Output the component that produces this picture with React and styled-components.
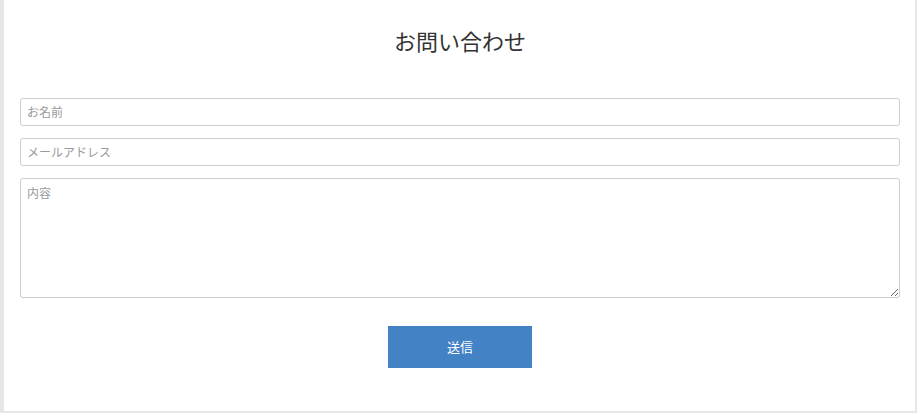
import React from 'react';
import styled, { createGlobalStyle } from 'styled-components';

const GlobalStyle = createGlobalStyle`
  html, body {
    margin: 0;
    padding: 0;
    background: #e6e6e6;
    font-family: "Noto Sans CJK JP", "Noto Sans", sans-serif;
  }
`;

const Page = styled.div`
  margin-left: 4px;
  width: 911px;
  height: 411px;
  background: #ffffff;
  box-sizing: border-box;
  padding: 24px 15px 0 16px;
`;

const Title = styled.h2`
  margin: 0 0 42px;
  font-size: 22px;
  line-height: 32px;
  font-weight: 400;
  color: #333333;
  text-align: center;
`;

const Form = styled.form`
  display: flex;
  flex-direction: column;
  gap: 12px;
`;

const Field = styled.input`
  box-sizing: border-box;
  display: block;
  width: 100%;
  height: 28px;
  margin: 0;
  padding: 0 6px 2px;
  border: 1px solid #cccccc;
  border-radius: 3px;
  font-family: inherit;
  font-size: 12px;
  color: #333;
  outline: none;
  &::placeholder { color: #999999; }
`;

const Area = styled.textarea`
  box-sizing: border-box;
  display: block;
  width: 100%;
  height: 120px;
  margin: 0;
  padding: 5px 6px;
  border: 1px solid #cccccc;
  border-radius: 3px;
  font-family: inherit;
  font-size: 12px;
  line-height: 17px;
  color: #333;
  outline: none;
  &::placeholder { color: #999999; }
`;

const Actions = styled.div`
  display: flex;
  justify-content: center;
  margin-top: 16px;
`;

const SendButton = styled.button`
  width: 144px;
  height: 42px;
  padding: 0 0 2px;
  border: none;
  background: #4282c5;
  color: #ffffff;
  font-family: inherit;
  font-size: 13px;
  cursor: pointer;
`;

export default function App() {
  return (
    <>
      <GlobalStyle />
      <Page>
        <Title>お問い合わせ</Title>
        <Form onSubmit={(e) => e.preventDefault()}>
          <Field type="text" placeholder="お名前" />
          <Field type="email" placeholder="メールアドレス" />
          <Area placeholder="内容" />
          <Actions>
            <SendButton type="submit">送信</SendButton>
          </Actions>
        </Form>
      </Page>
    </>
  );
}
